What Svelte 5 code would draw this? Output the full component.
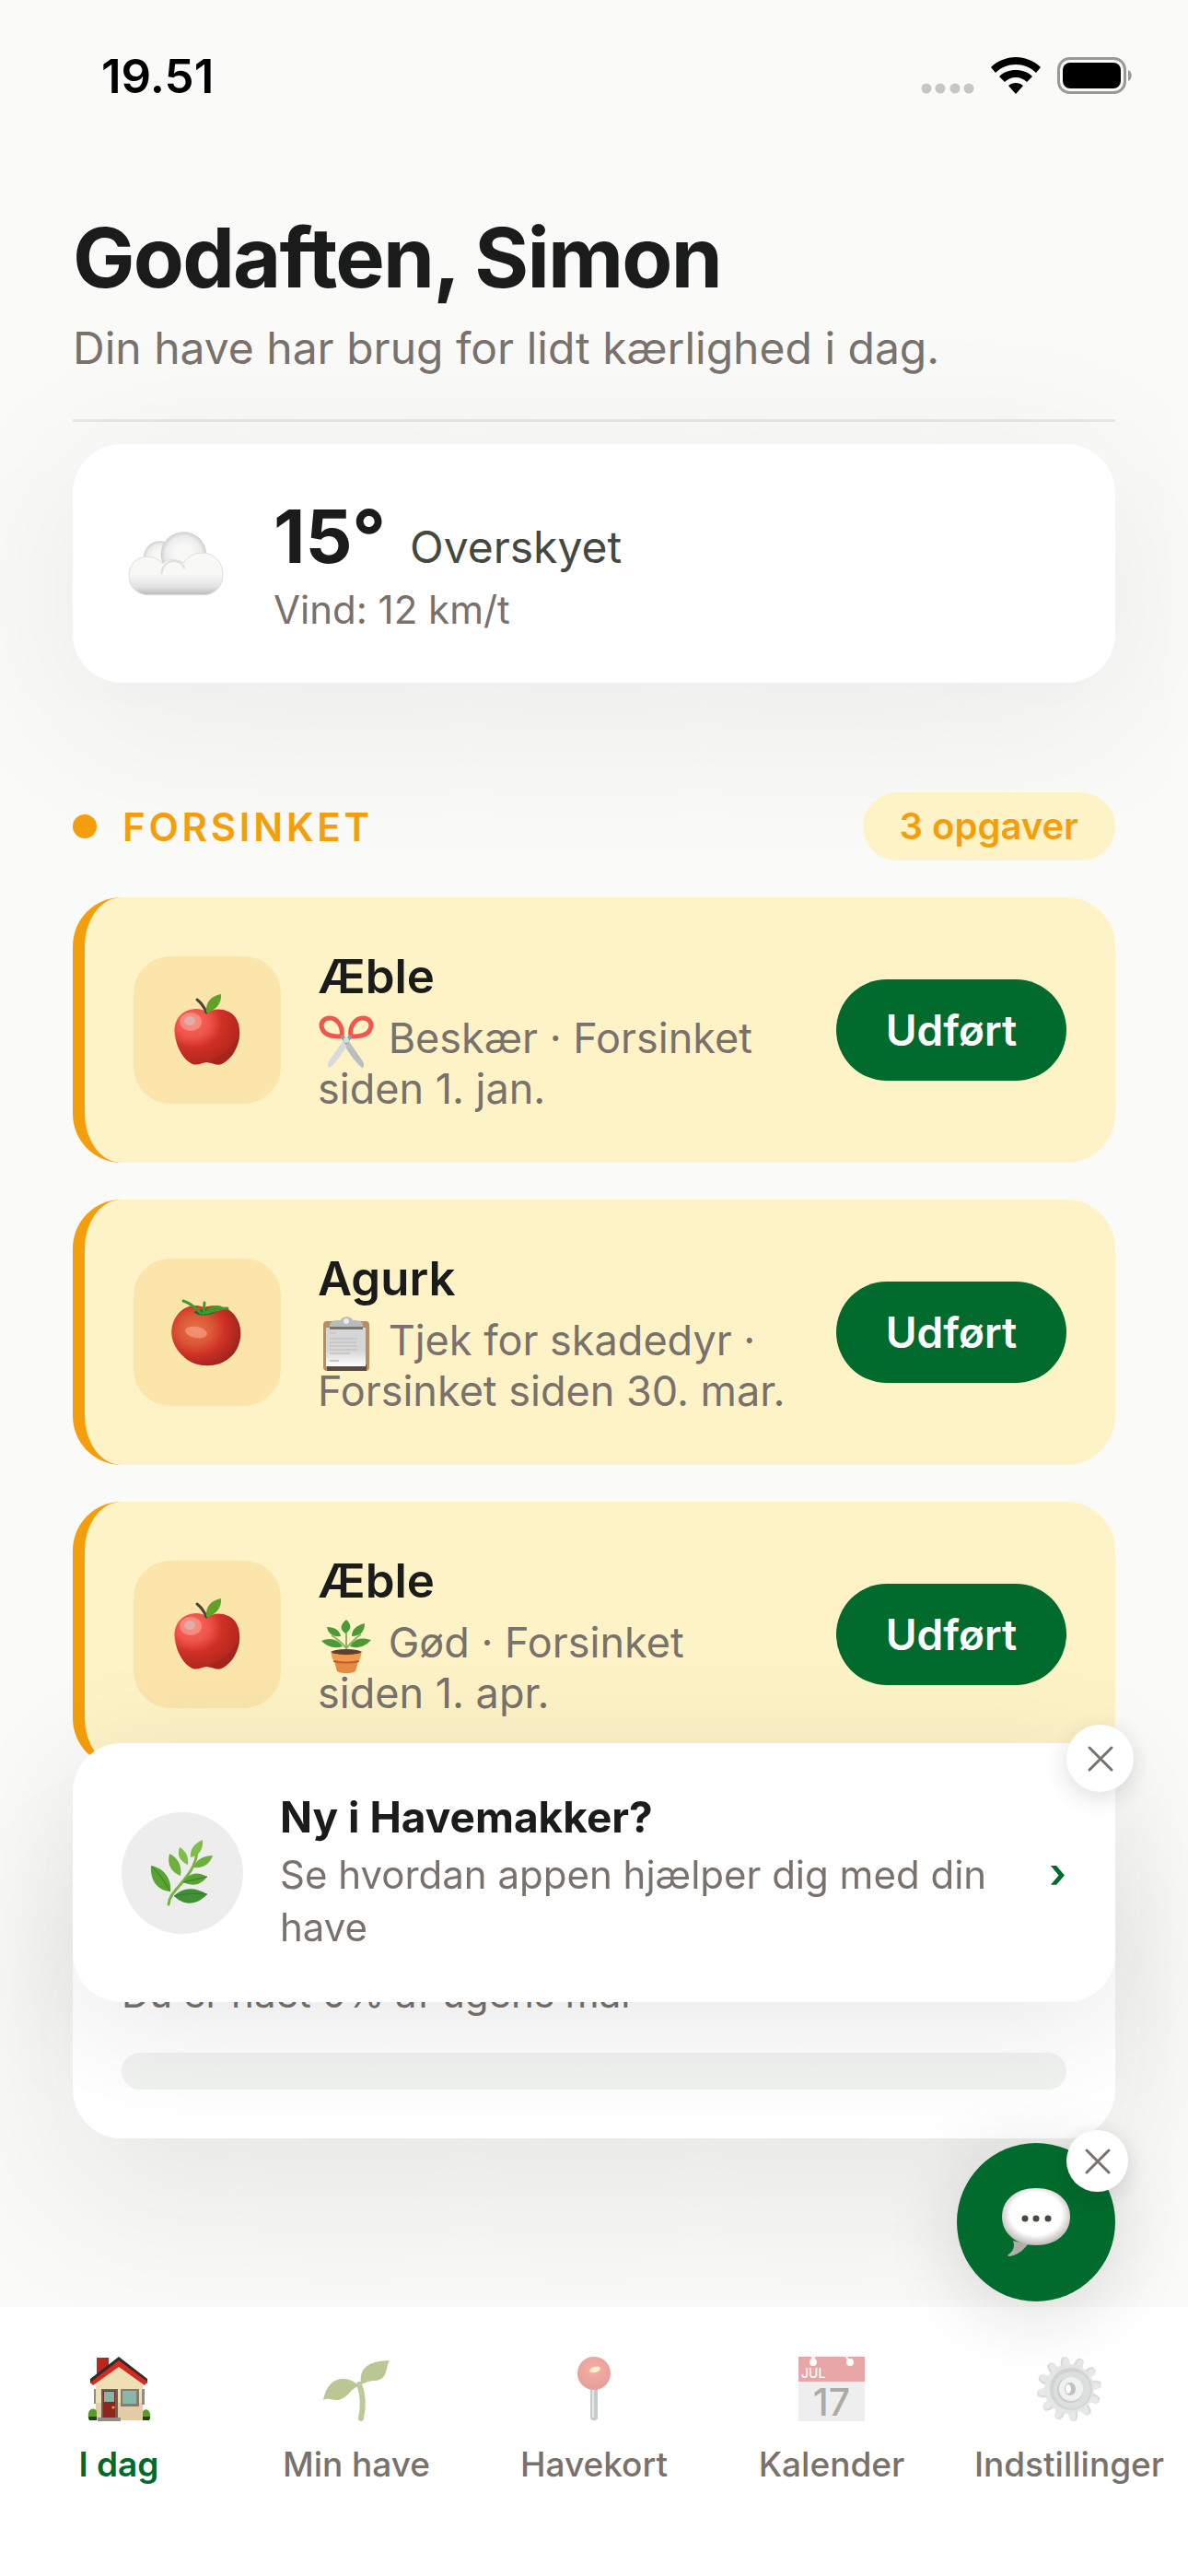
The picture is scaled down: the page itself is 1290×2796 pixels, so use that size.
<script lang="ts">
	type Task = { icon: string, name: string, actionIcon: string, text: string };

	const tasks: Task[] = [
		{ icon: 'apple', name: 'Æble', actionIcon: 'scissors', text: 'Beskær · Forsinket siden 1. jan.' },
		{ icon: 'tomato', name: 'Agurk', actionIcon: 'clipboard', text: 'Tjek for skadedyr · Forsinket siden 30. mar.' },
		{ icon: 'apple', name: 'Æble', actionIcon: 'plant', text: 'Gød · Forsinket siden 1. apr.' }
	];

	const tabs = [
		{ icon: 'house', label: 'I dag', active: true },
		{ icon: 'sprout', label: 'Min have', active: false },
		{ icon: 'pin', label: 'Havekort', active: false },
		{ icon: 'calendar', label: 'Kalender', active: false },
		{ icon: 'gear', label: 'Indstillinger', active: false }
	];

	const teeth = Array.from({ length: 12 }, (_, i) => i * 30 - 8);
	const progress = 0;

	let showGuide = $state(true);
	let showChat = $state(true);
</script>

{#snippet cross()}
	<svg class="cross" viewBox="0 0 28 28" aria-hidden="true">
		<path d="M2 2 26 26M26 2 2 26" fill="none" stroke="#78716c" stroke-width="3" stroke-linecap="round" />
	</svg>
{/snippet}

{#snippet icon(name: string)}
	{#if name === 'apple'}
		<svg class="plant-icon" viewBox="0 0 76 78" aria-hidden="true">
			<path d="M38 20C32 15 22 15 14 19 5 24 1 34 3 45c2 14 10 27 19 31 6 2 11-2 16-2s10 4 15 2c10-4 19-17 20-31 1-12-3-22-12-26-8-4-17-3-23 1z" fill="url(#apple-skin)" />
			<path d="M73 41c-4 16-15 24-35 33 5 0 10 4 15 2 10-4 19-17 20-31z" fill="#9f261e" opacity=".75" />
			<ellipse cx="20" cy="30" rx="12" ry="10" fill="#f9a092" opacity=".65" />
			<ellipse cx="19" cy="29" rx="6" ry="5" fill="#d9b7b5" opacity=".8" />
			<path d="M27 6c5 4 8 8 10 14" fill="none" stroke="#4b4340" stroke-width="3" stroke-linecap="round" />
			<path d="M37 20C36 9 42 2 53 0c1 9-5 18-16 20z" fill="#5fa226" />
		</svg>
	{:else if name === 'tomato'}
		<svg class="plant-icon" viewBox="2 -4 76 78" aria-hidden="true">
			<path d="M36 8C24 3 11 8 4 22-3 38 4 53 16 63c12 11 36 11 48 0 12-9 15-27 10-39C68 8 52 3 36 8z" fill="url(#tomato-skin)" />
			<ellipse cx="28" cy="35" rx="12" ry="6" fill="#f8a68a" opacity=".6" transform="rotate(10 28 35)" />
			<path d="M25 13c6-3 18-4 25-1-5 5-18 7-25 1z" fill="#1c6636" />
			<path d="M14 1c6 2 13 7 19 13M36 15 37 3M38 14c6-5 10-8 16-6M40 14c8-3 14-5 22-5" fill="none" stroke="#3f9a2e" stroke-width="3" stroke-linecap="round" />
		</svg>
	{:else if name === 'scissors'}
		<svg class="action-icon" viewBox="0 0 62 58" aria-hidden="true">
			<path d="M31 24 49 50c2 4 1 7-1 7C40 50 33 40 28 30z" fill="#b9bec0" />
			<path d="M30 24 12 50c-2 4-1 7 1 7 8-7 15-17 20-27z" fill="#d6dadb" />
			<g fill="none" stroke="#f0554e" stroke-width="5" stroke-linejoin="round">
				<path d="M26 23C28 12 21 3 13 3 6 3 2 9 5 15c3 7 11 8 21 8z" />
				<path d="M36 23C34 12 41 3 49 3c7 0 11 6 8 12-3 7-11 8-21 8z" />
			</g>
			<path d="m26 22 5 7 5-7" fill="none" stroke="#929a9c" stroke-width="4" />
			<circle cx="31" cy="27" r="3" fill="#d9dddd" />
		</svg>
	{:else if name === 'clipboard'}
		<svg class="action-icon" viewBox="0 0 62 58" aria-hidden="true">
			<rect x="6" y="4" width="50" height="54" rx="4" fill="#b98d5f" />
			<path d="M10 51h43v7H10z" fill="#5c4a42" />
			<path d="M9 11h43v42H9z" fill="url(#paper)" />
			<path d="M13 7c3-5 9-4 12-4 1-5 12-5 13 0 4 0 9 0 11 4v5H13z" fill="#b7bbbc" />
			<path d="M13 10h36v3H13z" fill="#77766f" />
			<circle cx="31" cy="4" r="3" fill="#e8ecec" />
			<path d="M13 17h7m-7 6h30M13 27h29M13 31h30M13 35h30M13 39h22M13 47h10" stroke="#c8c8c8" stroke-width="2" />
		</svg>
	{:else if name === 'plant'}
		<svg class="action-icon" viewBox="0 0 62 58" aria-hidden="true">
			<path d="M31 38V13M31 31C25 23 20 20 15 17m16 14c7-8 11-12 16-15" fill="none" stroke="#8cb365" stroke-width="2" />
			<path d="M30 15c-7-5-5-10 1-15 6 5 6 11-1 15zM25 18C17 19 11 15 10 8c9 0 14 4 15 10zM37 18c0-8 6-12 14-14 0 9-5 14-14 14zM27 29c-9 3-17 0-23-6 9-4 18-2 23 6zM35 29c5-9 13-10 23-7-6 7-15 10-23 7z" fill="#4c9a35" />
			<path d="M17 42h28l-4 14c-5 3-15 3-20 0z" fill="#e88b42" />
			<path d="M14 34h34l-2 9c-9 3-21 3-30 0z" fill="#f19a4e" />
			<ellipse cx="31" cy="35" rx="16" ry="3" fill="#5c4133" />
			<path d="M17 45c8 2 20 2 28 0" fill="none" stroke="#bc612c" stroke-width="2" />
		</svg>
	{:else if name === 'herb'}
		<svg class="herb" viewBox="0 0 68 72" aria-hidden="true">
			<path d="M19 70c1-11 10-17 18-28C44 33 49 25 50 13" fill="none" stroke="#78b43f" stroke-width="3" stroke-linecap="round" />
			<path d="M43 19c-1-9 4-15 13-19 1 9-3 17-13 19zM40 27C31 23 28 17 31 8c7 4 10 10 9 19z" fill="#7fbe47" />
			<path d="M32 39C22 35 17 27 20 15c9 4 14 13 12 24zM46 30c3-8 10-13 21-13-3 9-10 14-21 13z" fill="#6db03c" />
			<path d="M21 56C7 55-1 44 0 28c13 2 23 14 21 28zM35 46c5-9 14-13 26-6-7 9-15 11-26 6z" fill="#58a332" />
			<path d="M25 61c8-9 22-11 36-2-10 11-24 14-36 2z" fill="#419033" />
			<path d="M25 61c12-3 24-3 36-2M1 29c9 9 14 17 20 27M35 46l26-6" fill="none" stroke="#2f7d2c" />
		</svg>
	{:else if name === 'house'}
		<svg class="tab-icon" viewBox="0 0 72 70" aria-hidden="true">
			<path d="M12 1h13v18H12z" fill="#b8261c" />
			<path d="M11 25 36 4l26 24v41H11z" fill="#efdfb4" />
			<path d="M11 50h51v19H11z" fill="#e2cda6" />
			<path d="M36 0 5 24v5L36 8l31 21v-5z" fill="#332c2b" />
			<path d="M36 4 5 28l3 3L36 11l28 20 3-4z" fill="#d42a20" />
			<path d="M17 35h18v31H17z" fill="#6c6059" />
			<path d="M19 37h13v29H19z" fill="#8e251c" />
			<path d="M20 38h11v11H20z" fill="#86b6a9" />
			<circle cx="30" cy="55" r="1.6" fill="#f2a53a" />
			<path d="M38 35h20v19H38z" fill="#8a796c" />
			<path d="M40 37h15v14H40z" fill="#88b7ab" />
			<path d="M13 66h25v4H13zM9 35h2v16H9zM61 35h3v17h-3z" fill="#918c88" />
			<path d="M3 67c-2-13 9-12 9-7v8H3zM62 68v-8c1-5 10-4 8 8z" fill="#5b9a2b" />
			<path d="M3 65h9v4H4zM62 65h8l-1 4h-7z" fill="#25411f" />
		</svg>
	{:else if name === 'sprout'}
		<svg class="tab-icon" viewBox="0 0 72 70" aria-hidden="true">
			<path d="M39 30c4 10 5 23 2 37" fill="none" stroke="#7c9436" stroke-width="6" stroke-linecap="round" />
			<path d="M0 47c3-15 10-23 22-23 8 0 13 4 17 8-10 2-11 13-23 15-7 0-11-3-16 0z" fill="#78902d" />
			<path d="M41 30C39 13 47 5 72 4c-5 8-1 20-15 22-7 0-10 2-16 4z" fill="#78902d" />
		</svg>
	{:else if name === 'pin'}
		<svg class="tab-icon" viewBox="0 0 72 70" aria-hidden="true">
			<path d="M32 30h8v37c-2 3-6 3-8 0z" fill="#91989a" />
			<path d="M34 36h2v30h-2z" fill="#d0d5d5" />
			<circle cx="36" cy="18" r="18" fill="url(#pin-head)" />
			<ellipse cx="37" cy="14" rx="6" ry="3" fill="#ffe09a" transform="rotate(-15 37 14)" />
		</svg>
	{:else if name === 'calendar'}
		<svg class="tab-icon" viewBox="0 0 72 70" aria-hidden="true">
			<path d="M0 0h72v70H0z" fill="#dedede" />
			<path d="M0 0h72v27H0z" fill="#d45050" />
			<path d="M15 0h2v5h-2zM52 0l3 5" fill="#fff" stroke="#fff" stroke-width="2" />
			<circle cx="16" cy="6" r="4" fill="#fff" />
			<circle cx="56" cy="6" r="4" fill="#fff" />
			<text x="3" y="23" font-size="14" fill="#fff">JUL</text>
			<text x="36" y="64" font-size="41" font-weight="500" text-anchor="middle" fill="#5c584d">17</text>
		</svg>
	{:else if name === 'gear'}
		<svg class="tab-icon" viewBox="0 0 72 70" aria-hidden="true">
			<g transform="translate(36 35)">
				{#each teeth as angle}
					<path d="M-6-23-5-31-3-35H2L4-32 5-23z" fill="#b2b6b4" transform="rotate({angle})" />
					<path d="M-3-23-3-31-1-34H2L4-31 5-23z" fill="#cfd4d1" transform="rotate({angle})" />
				{/each}
				<circle r="27" fill="#cbcfcd" />
				<circle cx="2" r="23" fill="#a6a9a7" />
				<circle cx="3" cy="1" r="20" fill="#bcc0be" />
				<circle cx="1" cy="1" r="14" fill="#9a9d9a" />
				<circle cx="2" r="13" fill="#e3e6e4" />
				<ellipse cx="1" rx="6" ry="7" fill="#84827c" />
				<ellipse cx="-1" rx="3" ry="5" fill="#fff" />
			</g>
		</svg>
	{/if}
{/snippet}

<svg class="defs" width="0" height="0" aria-hidden="true">
	<defs>
		<radialGradient id="apple-skin" cx=".28" cy=".25" r=".75">
			<stop offset="0" stop-color="#fb6a60" />
			<stop offset=".35" stop-color="#f0524b" />
			<stop offset=".6" stop-color="#d03025" />
			<stop offset="1" stop-color="#b3261d" />
		</radialGradient>
		<radialGradient id="tomato-skin" cx=".35" cy=".4" r=".65">
			<stop offset="0" stop-color="#e8734a" />
			<stop offset=".4" stop-color="#da5535" />
			<stop offset=".65" stop-color="#d03025" />
			<stop offset="1" stop-color="#9f261e" />
		</radialGradient>
		<linearGradient id="paper" x1="0" y1="0" x2="0" y2="1">
			<stop offset=".6" stop-color="#d6d6d6" />
			<stop offset="1" stop-color="#fff" />
		</linearGradient>
		<radialGradient id="pin-head" cx=".5" cy=".4" r=".6">
			<stop offset="0" stop-color="#f0604f" />
			<stop offset="1" stop-color="#cb4238" />
		</radialGradient>
		<radialGradient id="puff" cx=".5" cy=".5" r=".5">
			<stop offset=".4" stop-color="#f8f8f7" />
			<stop offset=".8" stop-color="#ececeb" />
			<stop offset="1" stop-color="#cdcfce" />
		</radialGradient>
		<linearGradient id="cloud-base" x1="0" y1="0" x2="0" y2="1">
			<stop offset=".5" stop-color="#f8f8f7" />
			<stop offset=".8" stop-color="#e2e3e2" />
			<stop offset="1" stop-color="#b9bcba" />
		</linearGradient>
		<radialGradient id="bubble" cx=".5" cy=".45" r=".58">
			<stop offset=".65" stop-color="#fff" />
			<stop offset="1" stop-color="#b4aeaa" />
		</radialGradient>
	</defs>
</svg>

<div class="app">
	<div class="status-bar">
		<span class="time">19.51</span>
		<div class="status-icons">
			<svg class="signal" viewBox="0 0 58 12" aria-hidden="true">
				<path d="M6 6h0M21 6h0M37 6h0M52 6h0" stroke="#c6c6c5" stroke-width="11" stroke-linecap="round" />
			</svg>
			<svg class="wifi" viewBox="0 0 54 40" aria-hidden="true">
				<path d="M27 0c10 0 20 4 27 11l-5 6C43 11 35 8 27 8S11 11 5 17l-5-6C7 4 17 0 27 0zM27 14c7 0 13 2 18 7l-6 6c-3-3-7-5-12-5s-9 2-12 5l-6-6c5-5 11-7 18-7zM27 28c3 0 6 1 8 3l-8 9-8-9c2-2 5-3 8-3z" />
			</svg>
			<svg class="battery" viewBox="0 0 82 40" aria-hidden="true">
				<rect x="1.5" y="1.5" width="72" height="37" rx="12" fill="none" stroke="#9b9994" stroke-width="3" />
				<rect x="6" y="6" width="63" height="28" rx="8" />
				<path d="M77 14c5 2 5 10 0 12z" fill="#9b9994" />
			</svg>
		</div>
	</div>

	<main>
		<header>
			<h1>Godaften, Simon</h1>
			<p>Din have har brug for lidt kærlighed i dag.</p>
		</header>

		<section class="weather">
			<svg class="cloud" viewBox="0 0 104 70" aria-hidden="true">
				<circle cx="34" cy="28" r="18" fill="url(#puff)" />
				<circle cx="60" cy="25" r="25" fill="url(#puff)" />
				<path d="M20 27c7 0 13 3 17 8 3-4 9-6 15-4 3 0 6 2 8 3 4-7 11-11 20-11 14 0 23 11 23 24s-9 22-22 22H22C9 69 0 60 0 48s9-21 20-21z" fill="url(#cloud-base)" stroke="#dcdddc" />
				<path d="M36 46c0-8 6-14 13-14 6 0 10 3 12 8" fill="none" stroke="#dededd" stroke-width="2" />
			</svg>
			<div>
				<div class="weather-now">
					<span class="temperature">15°</span>
					<span class="condition">Overskyet</span>
				</div>
				<div class="wind">Vind: 12 km/t</div>
			</div>
		</section>

		<section class="overdue">
			<div class="section-header">
				<span class="dot"></span>
				<h2>Forsinket</h2>
				<span class="count">{tasks.length} opgaver</span>
			</div>
			{#each tasks as task}
				<article class="task">
					<div class="task-icon">{@render icon(task.icon)}</div>
					<div class="task-body">
						<h3>{task.name}</h3>
						<p>{@render icon(task.actionIcon)} {task.text}</p>
					</div>
					<button class="done" type="button">Udført</button>
				</article>
			{/each}
		</section>

		<section class="goal">
			<p id="goal-label">Du er nået {progress}% af ugens mål</p>
			<div class="bar" role="progressbar" aria-labelledby="goal-label" aria-valuenow={progress} aria-valuemin="0" aria-valuemax="100">
				<div class="bar-fill" style="width: {progress}%"></div>
			</div>
		</section>
	</main>

	<nav>
		{#each tabs as tab}
			<a href="#{tab.icon}" class:active={tab.active}>
				{@render icon(tab.icon)}
				<span>{tab.label}</span>
			</a>
		{/each}
	</nav>

	{#if showGuide}
		<aside class="guide">
			<a class="guide-link" href="#guide">
				<span class="guide-icon">{@render icon('herb')}</span>
				<span class="guide-body">
					<strong>Ny i Havemakker?</strong>
					<span class="guide-text">Se hvordan appen hjælper dig med din have</span>
				</span>
				<span class="chevron">›</span>
			</a>
			<button class="close" type="button" aria-label="Luk" onclick={() => (showGuide = false)}>{@render cross()}</button>
		</aside>
	{/if}

	{#if showChat}
		<div class="chat">
			<button class="chat-open" type="button" aria-label="Chat">
				<svg class="bubble" viewBox="0 0 74 75" aria-hidden="true">
					<path d="M12 57c2 6 1 11-5 15-1 1-1 2 1 2 8-1 15-6 20-13z" fill="#b3ada9" />
					<path d="M37 0c22 0 37 13 37 31S59 62 37 62 0 49 0 31 15 0 37 0z" fill="url(#bubble)" />
					<g fill="#4d4742">
						<circle cx="25" cy="33" r="3.5" />
						<circle cx="37" cy="33" r="3.5" />
						<circle cx="50" cy="33" r="3.5" />
					</g>
				</svg>
			</button>
			<button class="close small" type="button" aria-label="Luk chat" onclick={() => (showChat = false)}>{@render cross()}</button>
		</div>
	{/if}
</div>

<style>
	:global(body) {
		margin: 0;
		background: #fafaf8;
	}

	.app {
		min-height: 100vh;
		box-sizing: border-box;
		padding-bottom: 475px;
		font-family: Inter, "Liberation Sans", sans-serif;
		color: #1a1c1b;
	}

	h1, h2, h3, p {
		margin: 0;
	}

	button {
		border: 0;
		padding: 0;
		font-family: inherit;
		cursor: pointer;
	}

	svg {
		display: block;
		flex: none;
		overflow: visible;
	}

	.defs {
		position: absolute;
	}

	.status-bar {
		display: flex;
		align-items: center;
		justify-content: space-between;
		height: 164px;
		padding: 0 60px 0 110px;
	}

	.time {
		font-size: 51px;
		font-weight: 600;
		color: #000;
	}

	.status-icons {
		display: flex;
		align-items: flex-end;
		gap: 18px;
	}

	.signal {
		width: 58px;
		height: 12px;
	}

	.wifi {
		width: 54px;
		height: 40px;
	}

	.battery {
		width: 82px;
		height: 40px;
	}

	main {
		padding: 66px 79px 0;
	}

	header {
		padding-bottom: 47px;
		border-bottom: 3px solid #e6e8e6;
	}

	h1 {
		font-size: 90px;
		line-height: 100px;
		font-weight: 700;
		letter-spacing: -0.02em;
	}

	header p {
		margin-top: 18px;
		font-size: 48px;
		line-height: 60px;
		color: #78716c;
	}

	.weather {
		display: flex;
		align-items: center;
		gap: 46px;
		margin-top: 24px;
		padding: 53px;
		border-radius: 53px;
		background: #fff;
		box-shadow: 0 33px 180px rgba(26, 28, 27, 0.08);
	}

	.cloud {
		width: 103px;
		height: 70px;
		padding: 0 8px;
	}

	.weather-now {
		display: flex;
		align-items: baseline;
		gap: 26px;
	}

	.temperature {
		font-size: 80px;
		line-height: 94px;
		font-weight: 700;
	}

	.condition {
		font-size: 48px;
		line-height: 60px;
		color: #44483f;
	}

	.wind {
		margin-top: 6px;
		font-size: 42px;
		line-height: 53px;
		color: #78716c;
	}

	.overdue {
		display: flex;
		flex-direction: column;
		gap: 40px;
		margin-top: 119px;
	}

	.section-header {
		display: flex;
		align-items: center;
		height: 74px;
		color: #f59e0b;
	}

	.dot {
		width: 26px;
		height: 26px;
		margin-right: 28px;
		border-radius: 50%;
		background: #f59e0b;
	}

	h2 {
		flex: 1;
		font-size: 42px;
		font-weight: 600;
		letter-spacing: 0.09em;
		text-transform: uppercase;
	}

	.count {
		padding: 0 40px;
		border-radius: 37px;
		background: #fef3c7;
		font-size: 40px;
		line-height: 74px;
		font-weight: 600;
	}

	.task {
		position: relative;
		display: flex;
		align-items: center;
		gap: 40px;
		padding: 53px;
		border-left: 13px solid #f59e0b;
		border-radius: 53px;
		background: #fef3c7;
	}

	.task-icon {
		display: flex;
		flex: none;
		align-items: center;
		justify-content: center;
		width: 160px;
		height: 160px;
		border-radius: 40px;
		background: #fce5ab;
	}

	.plant-icon {
		width: 76px;
		height: 78px;
	}

	.task-body {
		flex: 1;
	}

	h3 {
		margin-bottom: 6px;
		font-size: 51px;
		line-height: 66px;
		font-weight: 600;
	}

	.task p {
		padding-right: 8px;
		font-size: 45px;
		line-height: 55px;
		color: #78716c;
	}

	.action-icon {
		display: inline-block;
		width: 62px;
		height: 58px;
		margin: -8px 2px -8px 0;
		vertical-align: middle;
	}

	.done {
		flex: none;
		width: 250px;
		height: 110px;
		border-radius: 55px;
		background: #006b2c;
		color: #fff;
		font-size: 46px;
		font-weight: 600;
	}

	.goal {
		margin-top: 80px;
		padding: 138px 53px 53px;
		border-radius: 53px;
		background: #fff;
		box-shadow: 0 53px 180px rgba(26, 28, 27, 0.1);
	}

	.goal p {
		font-size: 42px;
		line-height: 55px;
		color: #78716c;
	}

	.bar {
		height: 40px;
		margin-top: 37px;
		border-radius: 20px;
		background: #f1f3f1;
	}

	.bar-fill {
		height: 100%;
		border-radius: 20px;
		background: #006b2c;
	}

	nav {
		position: fixed;
		right: 0;
		bottom: 0;
		left: 0;
		display: grid;
		grid-template-columns: repeat(5, 1fr);
		padding: 54px 0 96px;
		background: #fff;
	}

	nav a {
		display: flex;
		flex-direction: column;
		align-items: center;
		gap: 22px;
		font-size: 37px;
		line-height: 50px;
		font-weight: 500;
		color: #78716c;
		text-decoration: none;
	}

	nav a.active {
		font-weight: 600;
		color: #006b2c;
	}

	.tab-icon {
		width: 72px;
		height: 70px;
		opacity: 0.5;
	}

	.active .tab-icon {
		opacity: 1;
	}

	.guide {
		position: fixed;
		right: 79px;
		bottom: 623px;
		left: 79px;
		border-radius: 53px;
		background: #fff;
		box-shadow: 0 26px 132px rgba(26, 28, 27, 0.1);
	}

	.guide-link {
		display: flex;
		align-items: center;
		padding: 53px;
		color: inherit;
		text-decoration: none;
	}

	.guide-icon {
		display: flex;
		flex: none;
		align-items: center;
		justify-content: center;
		width: 132px;
		height: 132px;
		margin-right: 40px;
		border-radius: 50%;
		background: #ededed;
	}

	.herb {
		width: 68px;
		height: 72px;
	}

	.guide-body {
		display: flex;
		flex: 1;
		flex-direction: column;
		gap: 6px;
	}

	.guide-body strong {
		font-size: 46px;
		line-height: 55px;
		font-weight: 700;
	}

	.guide-text {
		font-size: 42px;
		line-height: 57px;
		color: #78716c;
	}

	.chevron {
		margin-left: 40px;
		font-size: 45px;
		font-weight: 600;
		color: #006b2c;
	}

	.close {
		position: absolute;
		top: -20px;
		right: -20px;
		display: flex;
		align-items: center;
		justify-content: center;
		width: 73px;
		height: 73px;
		border-radius: 50%;
		background: #fff;
		box-shadow: 0 6px 26px rgba(26, 28, 27, 0.15);
	}

	.close.small {
		top: -14px;
		right: -14px;
		width: 67px;
		height: 67px;
	}

	.cross {
		width: 28px;
		height: 28px;
	}

	.chat {
		position: fixed;
		right: 79px;
		bottom: 298px;
	}

	.chat-open {
		display: flex;
		align-items: center;
		justify-content: center;
		width: 172px;
		height: 172px;
		border-radius: 50%;
		background: #006b2c;
		box-shadow: 0 13px 80px rgba(26, 28, 27, 0.15);
	}

	.bubble {
		width: 74px;
		height: 75px;
	}
</style>
